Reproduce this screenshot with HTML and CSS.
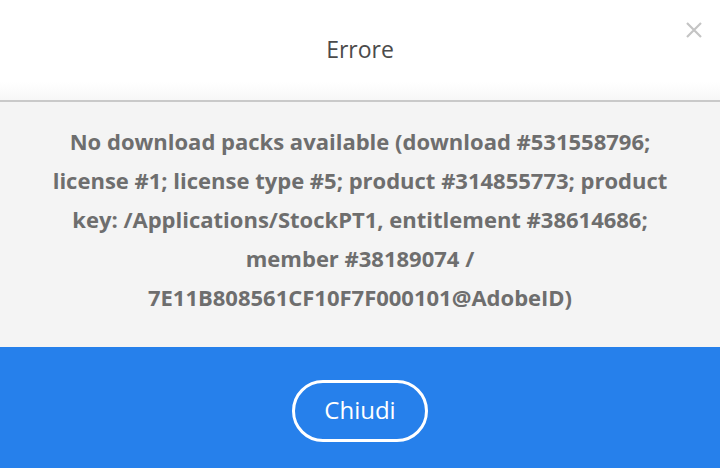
FILE: index.html
```html
<!DOCTYPE html>
<html lang="it">
<head>
<meta charset="utf-8">
<link rel="stylesheet" href="styles.css">
</head>
<body>
<div class="dialog">
  <header class="head">
    <h1 class="title">Errore</h1>
    <button class="close" aria-label="Chiudi">
      <svg width="16" height="16" viewBox="0 0 16 16"><path d="M1 1L15 15M15 1L1 15" stroke="#c4c4c4" stroke-width="2.2" stroke-linecap="butt"/></svg>
    </button>
  </header>
  <main class="body">
    <p class="msg">No download packs available (download #531558796; license #1; license type #5; product #314855773; product key: /Applications/StockPT1, entitlement #38614686; member #38189074 / 7E11B808561CF10F7F000101@AdobeID)</p>
  </main>
  <footer class="foot">
    <button class="btn">Chiudi</button>
  </footer>
</div>
</body>
</html>
```
FILE: styles.css
```css
* { box-sizing: border-box; }
html, body { margin: 0; padding: 0; }
body {
  width: 720px;
  height: 468px;
  overflow: hidden;
  font-family: "Open Sans", "Noto Sans", sans-serif;
  background: #fff;
}
.dialog { display: flex; flex-direction: column; height: 468px; }
.head {
  position: relative;
  display: flex;
  align-items: center;
  justify-content: center;
  background: linear-gradient(#ffffff 0, #ffffff 82px, #f7f7f7 100px);
  border-bottom: 2px solid #c9c9c9;
  height: 102px;
}
.title {
  margin: 0;
  font-size: 23px;
  font-weight: 400;
  color: #4b4b4b;
  padding-bottom: 2px;
}
.close {
  position: absolute;
  top: 22px;
  right: 18px;
  border: 0;
  background: none;
  padding: 0;
  width: 16px;
  height: 16px;
  display: block;
}
.close svg { display: block; }
.body {
  background: #f4f4f4;
  height: 245px;
  display: flex;
  align-items: center;
  justify-content: center;
  padding: 0 50px 10px;
}
.msg {
  margin: 0;
  text-align: center;
  font-size: 22px;
  font-weight: 700;
  line-height: 39px;
  color: #6e6e6e;
  letter-spacing: 0;
}
.foot {
  flex: 1;
  background: #2680eb;
  display: flex;
  justify-content: center;
  padding-top: 33px;
}
.btn {
  width: 136px;
  height: 62px;
  border: 3px solid #fff;
  border-radius: 31px;
  background: transparent;
  color: #fff;
  font-family: "Open Sans", "Noto Sans", sans-serif;
  font-size: 24px;
  font-weight: 400;
  padding: 0 0 3px;
}
```
